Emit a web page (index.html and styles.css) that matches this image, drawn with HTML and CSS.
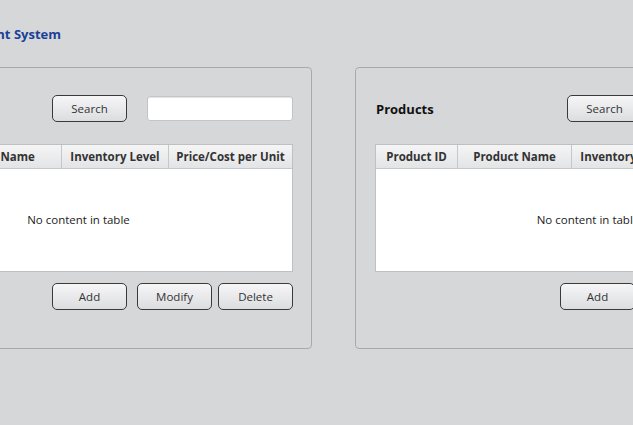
FILE: index.html
```html
<!DOCTYPE html>
<html>
<head>
<meta charset="utf-8">
<link rel="stylesheet" href="styles.css">
</head>
<body>
<div class="app">
  <div class="title"><span>Inventory Management System</span></div>
  <div class="panels">
    <div class="panel panel-left">
      <div class="toolbar">
        <span class="panel-title">Parts</span>
        <button class="btn">Search</button>
        <input class="field" type="text">
      </div>
      <div class="table">
        <div class="thead">
          <div class="th c1">Part ID</div>
          <div class="th c2">Part Name</div>
          <div class="th c3">Inventory Level</div>
          <div class="th c4">Price/Cost per Unit</div>
        </div>
        <div class="tbody">No content in table</div>
      </div>
      <div class="actions">
        <button class="btn">Add</button>
        <button class="btn btn-mod">Modify</button>
        <button class="btn btn-del">Delete</button>
      </div>
    </div>
    <div class="panel panel-right">
      <div class="toolbar">
        <span class="panel-title">Products</span>
        <button class="btn">Search</button>
        <input class="field" type="text">
      </div>
      <div class="table">
        <div class="thead">
          <div class="th p1">Product ID</div>
          <div class="th p2">Product Name</div>
          <div class="th p3">Inventory Level</div>
          <div class="th p4">Price per Unit</div>
        </div>
        <div class="tbody">No content in table</div>
      </div>
      <div class="actions">
        <button class="btn">Add</button>
        <button class="btn btn-mod">Modify</button>
        <button class="btn btn-del">Delete</button>
      </div>
    </div>
  </div>
</div>
</body>
</html>
```
FILE: styles.css
```css
html, body {
  margin: 0;
  padding: 0;
  background: #d6d7d9;
  overflow: hidden;
  width: 633px;
  height: 425px;
}
body {
  font-family: "Open Sans", "Noto Sans", "Liberation Sans", sans-serif;
  font-size: 11.5px;
  color: #333;
}
.app {
  margin-left: -156px;
  width: 1000px;
  padding-top: 25px;
}
.title {
  width: 217px;
  height: 18px;
  display: flex;
  justify-content: flex-end;
  white-space: nowrap;
  font-weight: bold;
  font-size: 13px;
  line-height: 18px;
  color: #1b4196;
}
.panels {
  display: flex;
  gap: 43px;
  margin-top: 24px;
}
.panel {
  box-sizing: border-box;
  width: 468px;
  height: 282px;
  border: 1px solid #a9aaac;
  border-radius: 4px;
  padding: 27px 18px 0 19px;
  display: flex;
  flex-direction: column;
}
.panel-right {
  width: 465px;
}
.toolbar {
  display: flex;
  align-items: center;
  height: 27px;
}
.panel-title {
  font-weight: bold;
  font-size: 13px;
  color: #111;
  margin-right: auto;
  padding-left: 1px;
}
.btn {
  box-sizing: border-box;
  width: 75px;
  height: 27px;
  border: 1px solid #3a3a3a;
  border-radius: 5px;
  background: linear-gradient(#f6f6f7, #dcdde0);
  font-family: inherit;
  font-size: 11.5px;
  color: #333;
  padding: 0;
}
.field {
  box-sizing: border-box;
  width: 146px;
  height: 25px;
  margin-left: 20px;
  border: 1px solid #c4c5c7;
  border-radius: 3px;
  background: #fff;
  box-shadow: inset 0 1px 1px #e4e4e4;
}
.panel-right .toolbar {
  margin-right: -7px;
}
.table {
  margin-top: 22px;
  box-sizing: border-box;
  height: 128px;
  border: 1px solid #bfc0c2;
  background: #fff;
  display: flex;
  flex-direction: column;
}
.thead {
  display: flex;
  height: 23px;
  background: linear-gradient(#f5f5f6, #e3e4e5);
  border-bottom: 1px solid #c6c7c9;
}
.th {
  box-sizing: border-box;
  display: flex;
  align-items: center;
  justify-content: center;
  font-weight: bold;
  color: #333;
  border-right: 1px solid #c6c7c9;
  white-space: nowrap;
}
.c1 { width: 82px; }
.c2 { width: 115px; }
.c3 { width: 107px; }
.c4 { flex: 1; border-right: none; }
.p1 { width: 82px; }
.p2 { width: 114px; }
.p3 { width: 107px; }
.p4 { flex: 1; border-right: none; }
.tbody {
  flex: 1;
  display: flex;
  align-items: center;
  justify-content: center;
  color: #222;
  padding-bottom: 1px;
}
.actions {
  display: flex;
  justify-content: flex-end;
  margin-top: 11px;
}
.btn-mod { margin-left: 10px; }
.btn-del { margin-left: 6px; }
```
